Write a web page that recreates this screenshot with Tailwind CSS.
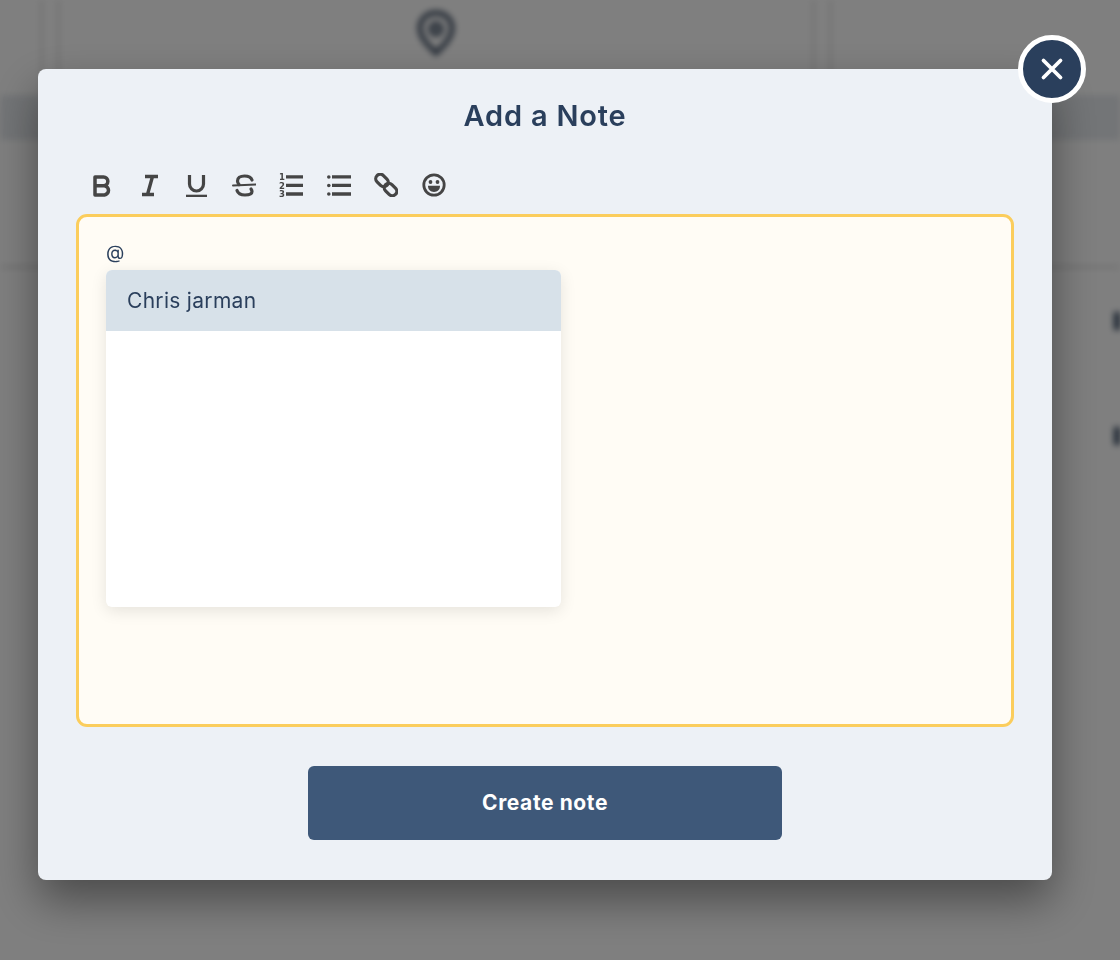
<!DOCTYPE html>
<html lang="en">
<head>
    <meta charset="UTF-8">
    <title>Add a Note</title>
    <script src="https://cdn.jsdelivr.net/npm/@tailwindcss/browser@4"></script>
</head>
<body class="bg-white font-['Inter','Liberation_Sans',sans-serif] overflow-hidden">
    <!-- page behind the modal -->
    <div class="h-[960px] w-[1120px] overflow-hidden blur-[3px]">
        <div class="h-[95px] pl-[40px]">
            <div class="w-[792px] h-[95px] border-x-[3px] border-[#e4e4e4] px-[14px]">
                <div class="h-full border-x-[3px] border-[#e4e4e4] flex justify-center pt-[10px]">
                    <svg class="w-[38px] h-[46px]" viewBox="0 0 38 46" fill="none" stroke="#47566a" stroke-width="5"><path d="M19 3C9 3 3 10 3 18c0 10 9 18 16 25 7-7 16-15 16-25C35 10 29 3 19 3z"/><circle cx="19" cy="19" r="5"/></svg>
                </div>
            </div>
        </div>
        <div class="h-[45px] bg-[#e6eaee]"></div>
        <div class="h-[128px] border-b-2 border-[#d4d4d4]"></div>
        <div class="flex flex-col items-end gap-[97px] pt-[44px]">
            <div class="w-[6px] h-[18px] bg-[#33475f]"></div>
            <div class="w-[6px] h-[18px] bg-[#33475f]"></div>
        </div>
    </div>

    <!-- overlay -->
    <div class="fixed inset-0 bg-black/50"></div>

    <!-- modal -->
    <div class="fixed left-[38px] top-[69px] w-[1014px] h-[811px] bg-[#edf1f6] rounded-[8px] shadow-[0_20px_45px_rgba(0,0,0,0.42)] px-[38px] pt-[28px] flex flex-col">
        <button class="absolute -right-[34px] -top-[34px] w-[68px] h-[68px] rounded-full bg-[#2a3f5c] border-[5px] border-white flex items-center justify-center">
            <svg class="w-[24px] h-[24px]" viewBox="0 0 24 24" fill="none" stroke="#fff" stroke-width="3.800" stroke-linecap="round"><path d="M3.500 3.500l17 17M20.500 3.500l-17 17"/></svg>
        </button>

        <h2 class="text-center text-[29px] leading-[38px] font-semibold tracking-[0.8px] text-[#2a3f5c]">Add a Note</h2>

        <div class="flex gap-[23.500px] pl-[13px] mt-[38px] h-[24px]">
            <!-- bold -->
            <svg class="w-[24px] h-[24px] shrink-0" viewBox="0 0 24 24" fill="none" stroke="#454545" stroke-width="3.500" stroke-linejoin="round"><path d="M6 4h8.500a4.300 4.300 0 0 1 0 8.700H6zM6 12.700h9.500a4.700 4.700 0 0 1 0 9.300H6z"/></svg>
            <!-- italic -->
            <svg class="w-[24px] h-[24px] shrink-0" viewBox="0 0 24 24" fill="none" stroke="#454545" stroke-width="3.400"><path d="M8 3.500h13M5 21.500h12M15.500 3.500l-5 18"/></svg>
            <!-- underline -->
            <svg class="w-[24px] h-[24px] shrink-0" viewBox="0 0 24 24" fill="none" stroke="#454545"><path stroke-width="3.200" d="M5.500 2v9a7 7 0 0 0 14 0V2"/><path stroke-width="2.600" d="M2 23h21"/></svg>
            <!-- strikethrough -->
            <svg class="w-[24px] h-[24px] shrink-0" viewBox="0 0 24 24" fill="none" stroke="#454545" stroke-linecap="round"><path stroke-width="3.200" d="M20 7c-1-3-3.500-4-7.500-4C8 3 5.500 5 5.500 8c0 1.500.5 2.500 1.500 3.500M19 16c.7 1 1 1.800 1 2.500 0 2.200-3 3.500-7 3.500s-7-1.500-8-4.500"/><path stroke-width="2" d="M1 12.500l23-1"/></svg>
            <!-- ordered list -->
            <svg class="w-[24px] h-[24px] shrink-0 overflow-visible" viewBox="0 0 24 24" fill="#454545" stroke="none"><path d="M7 2.200h17v3.400H7zM7 10.700h17v3.400H7zM7 19.300h17v3.400H7z"/><text x="0" y="7" font-size="8.500" font-weight="700" font-family="DejaVu Sans">1</text><text x="0" y="15.500" font-size="8.500" font-weight="700" font-family="DejaVu Sans">2</text><text x="0" y="23.500" font-size="8.500" font-weight="700" font-family="DejaVu Sans">3</text></svg>
            <!-- bullet list -->
            <svg class="w-[24px] h-[24px] shrink-0" viewBox="0 0 24 24" fill="#454545" stroke="none"><path d="M5 2.200h19v3.400H5zM5 10.700h19v3.400H5zM5 19.300h19v3.400H5z"/><circle cx="1.800" cy="4" r="1.800"/><circle cx="1.800" cy="12.500" r="1.800"/><circle cx="1.800" cy="21" r="1.800"/></svg>
            <!-- link -->
            <svg class="w-[24px] h-[24px] shrink-0" viewBox="0 0 24 24" fill="none" stroke="#454545" stroke-width="3.200"><rect x="1" y="3" width="14" height="9" rx="4.500" transform="rotate(45 8 7.500)"/><rect x="9.500" y="12" width="14" height="9" rx="4.500" transform="rotate(45 16.500 16.500)"/></svg>
            <!-- emoji -->
            <svg class="w-[24px] h-[24px] shrink-0" viewBox="0 0 24 24"><circle cx="12" cy="12" r="10.200" fill="none" stroke="#454545" stroke-width="2.800"/><circle cx="8.500" cy="9" r="1.900" fill="#454545"/><circle cx="15.500" cy="9" r="1.900" fill="#454545"/><path d="M6 12.800h12c0 4-2.500 6.200-6 6.200s-6-2.200-6-6.200z" fill="#454545"/></svg>
        </div>

        <div class="mt-[17px] h-[513px] border-[3px] border-[#fbcd5c] rounded-[11px] bg-[#fffcf5] pl-[27px] pt-[24px]">
            <p class="text-[19px] leading-[24px] text-[#2a3f5c]">@</p>
            <div class="mt-[5px] w-[455px] h-[337px] bg-white rounded-[6px] shadow-[0_4px_16px_rgba(0,0,0,0.1)] overflow-hidden">
                <div class="h-[61px] bg-[#d7e1e9] pl-[21px] flex items-center text-[21px] tracking-[0.3px] text-[#2a3f5c]">Chris jarman</div>
            </div>
        </div>

        <button class="mt-[39px] mx-auto w-[474px] h-[74px] rounded-[6px] bg-[#3e5879] text-white text-[21px] tracking-[0.6px] font-bold">Create note</button>
    </div>
</body>
</html>
